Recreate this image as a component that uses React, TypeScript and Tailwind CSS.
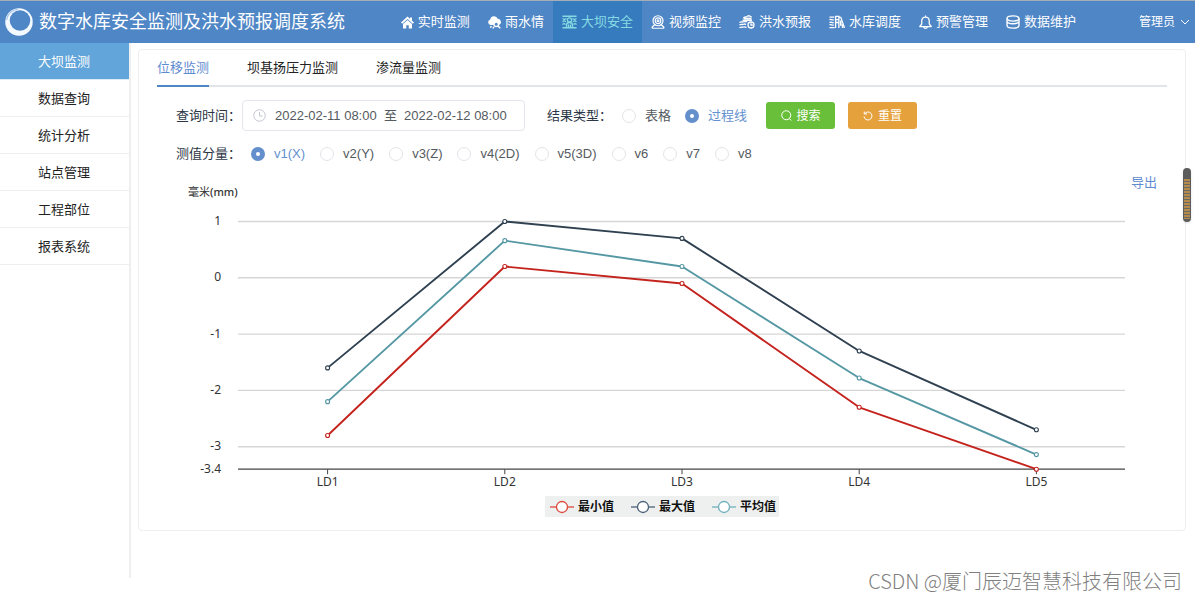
import { useState, type ReactNode } from "react";

const BLUE = "#4f86c6";

function HomeIcon() {
  return (
    <svg width="13" height="13" viewBox="0 0 26 26" fill="currentColor" aria-hidden="true">
      <path d="M13 1 0 13.200l2.500 2.500L13 6.200l10.500 9.500 2.500-2.500L22 9.500V3h-4v2.700z" />
      <path d="M13 8 4 16V25h6.500v-6.500h5V25H22v-9z" />
    </svg>
  );
}

function RainIcon() {
  return (
    <svg width="13" height="13" viewBox="0 0 26 26" aria-hidden="true">
      <path
        d="M5.500 18A5.500 5.500 0 0 1 4.500 7.200 7.800 7.800 0 0 1 19.500 5.500a6.500 6.500 0 0 1 4 11.500z"
        fill="currentColor"
      />
      <circle cx="16.500" cy="16.500" r="4.600" fill={BLUE} stroke="currentColor" strokeWidth="3" />
      <path d="m20 20 4.500 4.500M6.500 20l-1.500 3.500M11.500 21.500l-1.500 3.500" stroke="currentColor" strokeWidth="3" />
    </svg>
  );
}

function DamIcon() {
  return (
    <svg width="15" height="14" viewBox="0 0 30 28" fill="none" stroke="currentColor" strokeWidth="2.600" aria-hidden="true">
      <path d="M1 2.500h28M1 7l4 2 4-2M21 7l4 2 4-2M1 13.500l3-2 4 2M22 13.500l4-2 3 2M1 19l3-2 3 2M23 19l3-2 3 2M1 25.500h28" />
      <circle cx="15" cy="10" r="4.200" />
      <path d="M9 25v-5c0-3 2-5 6-5s6 2 6 5v5M13 19v6M17 19v6" />
    </svg>
  );
}

function CameraIcon() {
  return (
    <svg width="14" height="14" viewBox="0 0 28 28" fill="none" stroke="currentColor" strokeWidth="2.400" aria-hidden="true">
      <circle cx="14" cy="11.500" r="10" />
      <circle cx="14" cy="11.500" r="5.600" />
      <circle cx="14" cy="11.500" r="1.800" />
      <path d="m7.500 19.500-5 4.500c-1 1.500 0 2.500 1.500 2.500h20c1.500 0 2.500-1 1.500-2.500l-5-4.500" />
    </svg>
  );
}

function FloodIcon() {
  return (
    <svg width="16" height="14" viewBox="0 0 32 28" fill="none" stroke="currentColor" strokeWidth="2.600" aria-hidden="true">
      <path d="M7 10.500h19M9 7c0-2 2-3 4.500-3 3 0 3-2.500 6-2.500 2.500 0 3 2.500 6 2.500" />
      <path d="M10 7.200h15" strokeWidth="4" />
      <path d="M1 15c3-2.500 5 0 8-1.500s5 1 7.500-.5M1 20c3-2.500 5 0 8-1.500s3 .5 5 0M1 25.500c3-2.500 5 0 8-1.500s4 1 6 .5" />
      <circle cx="24" cy="20" r="6" />
      <path d="M24 16.500V20h3.500" />
    </svg>
  );
}

function ReservoirIcon() {
  return (
    <svg width="16" height="14" viewBox="0 0 34 28" fill="none" stroke="currentColor" strokeWidth="2.800" aria-hidden="true">
      <path d="M1 3.500h10M1 9c3-2 5 2 9 0M1 15c3-2 6 2 9 0M1 20c3-2 6 2 9 0M1 26h11" />
      <path d="M14 27V2h7v25" />
      <path d="M21 4h4l8 22.500M14 9h7M14 15h7" />
      <path d="M25 11v11M29 19v8" strokeWidth="3.500" />
    </svg>
  );
}

function BellIcon() {
  return (
    <svg width="13" height="14" viewBox="0 0 26 28" fill="none" stroke="currentColor" strokeWidth="2.500" strokeLinejoin="round" aria-hidden="true">
      <path d="M13 1v3M5.500 18V12c0-5 3-8 7.500-8s7.500 3 7.500 8v6l4 5h-23z" />
      <path d="M9.500 24c.5 3.500 6.500 3.500 7 0" />
    </svg>
  );
}

function DatabaseIcon() {
  return (
    <svg width="14" height="14" viewBox="0 0 28 28" fill="none" stroke="currentColor" strokeWidth="2.700" aria-hidden="true">
      <ellipse cx="14" cy="7" rx="12" ry="5.200" />
      <path d="M2 7v5c0 3 5 5.500 12 5.500 5 0 9-1 11-3M2 12v8.500c0 3 5 5.700 12 5.700s12-2.700 12-5.700V7" />
    </svg>
  );
}

const NAV: { label: string; icon: ReactNode }[] = [
  { label: "实时监测", icon: <HomeIcon /> },
  { label: "雨水情", icon: <RainIcon /> },
  { label: "大坝安全", icon: <DamIcon /> },
  { label: "视频监控", icon: <CameraIcon /> },
  { label: "洪水预报", icon: <FloodIcon /> },
  { label: "水库调度", icon: <ReservoirIcon /> },
  { label: "预警管理", icon: <BellIcon /> },
  { label: "数据维护", icon: <DatabaseIcon /> },
];

const SIDE = ["大坝监测", "数据查询", "统计分析", "站点管理", "工程部位", "报表系统"];
const TABS = ["位移监测", "坝基扬压力监测", "渗流量监测"];
const COMPONENTS = ["v1(X)", "v2(Y)", "v3(Z)", "v4(2D)", "v5(3D)", "v6", "v7", "v8"];

const POINTS = ["LD1", "LD2", "LD3", "LD4", "LD5"];
const SERIES = [
  { name: "最小值", color: "#c4231d", legend: "#dc4a3c", values: [-2.8, 0.2, -0.1, -2.3, -3.4] },
  { name: "最大值", color: "#2f4050", legend: "#4b6078", values: [-1.6, 1, 0.7, -1.3, -2.7] },
  { name: "平均值", color: "#5598a4", legend: "#6fb0ba", values: [-2.2, 0.66, 0.2, -1.78, -3.14] },
];

const px = (i: number) => 82 + 177.2 * (i + 0.5);
const py = (v: number) => 21.5 + (1 - v) * 56.3;

function Header() {
  return (
    <header className="flex h-[43px] items-center border-t border-[#a5adb6] bg-[#4f86c6] pl-[5px] pr-[5px] text-white">
      <svg width="28" height="28" viewBox="0 0 56 56" aria-hidden="true">
        <circle cx="28" cy="28" r="27.500" fill="#f4f9ff" />
        <circle cx="30" cy="25" r="20.500" fill="#4f86c6" />
        <path d="M3 24A25.500 25.500 0 0 1 26 2.500" fill="none" stroke="#a9c8e8" strokeWidth="2.500" />
      </svg>
      <h1 className="ml-[6px] whitespace-nowrap text-[18px] leading-6">数字水库安全监测及洪水预报调度系统</h1>
      <nav className="ml-auto flex self-stretch">
        {NAV.map((item) => (
          <a
            key={item.label}
            href="#"
            aria-current={item.label === "大坝安全" ? "page" : undefined}
            className="flex items-center gap-1 whitespace-nowrap px-[9px] text-[13px] leading-5 aria-[current=page]:bg-[#377bbf] aria-[current=page]:text-[#86dbe2]"
          >
            {item.icon}
            {item.label}
          </a>
        ))}
      </nav>
      <button type="button" className="ml-[54px] flex items-center gap-[5px] whitespace-nowrap text-[12px] leading-5">
        管理员
        <svg width="10" height="8" viewBox="0 0 10 8" fill="none" stroke="currentColor" aria-hidden="true">
          <path d="m1 2 4 4 4-4" />
        </svg>
      </button>
    </header>
  );
}

function Sidebar() {
  return (
    <aside className="mb-[22px] w-[131px] shrink-0 border-r-2 border-[#efefef]">
      {SIDE.map((label, i) => (
        <a
          key={label}
          href="#"
          className={
            i === 0
              ? "flex h-[37px] items-center border-b border-[#dcebf7] bg-[#62a5da] pl-[38px] pt-[2px] text-[13px] text-white"
              : "flex h-[37px] items-center border-b border-[#efefef] pl-[38px] pt-[2px] text-[13px] text-[#222]"
          }
        >
          {label}
        </a>
      ))}
    </aside>
  );
}

type RadioProps = { name: string; label: string; checked: boolean; onSelect: () => void };

function Radio({ name, label, checked, onSelect }: RadioProps) {
  return (
    <label className="flex cursor-pointer items-center gap-[9px] whitespace-nowrap text-[13px] leading-5 text-[#555a60] has-checked:text-[#6390cf]">
      <input
        type="radio"
        name={name}
        checked={checked}
        onChange={onSelect}
        className="size-[14px] appearance-none rounded-full border border-[#e2e4e8] bg-white checked:border-[5px] checked:border-[#6390cc]"
      />
      {label}
    </label>
  );
}

function Filters() {
  const [type, setType] = useState("过程线");
  const [component, setComponent] = useState("v1(X)");
  return (
    <form className="pl-[19px]" onSubmit={(e) => e.preventDefault()}>
      <div className="mt-[13px] flex items-center">
        <label htmlFor="from" className="whitespace-nowrap text-[13px] leading-5 text-[#2c3646]">
          查询时间：
        </label>
        <div className="ml-px flex h-[31px] w-[283px] items-center rounded border border-[#e3e6ec] pl-[10px] text-[13px] text-[#555a60]">
          <svg width="13" height="13" viewBox="0 0 26 26" fill="none" stroke="#c3c7cf" strokeWidth="2" aria-hidden="true">
            <circle cx="13" cy="13" r="11.500" />
            <path d="M13 6v8h6" />
          </svg>
          <input id="from" defaultValue="2022-02-11 08:00" className="ml-[9px] w-[104px] outline-none" />
          <span className="ml-[5px]">至</span>
          <input aria-label="结束时间" defaultValue="2022-02-12 08:00" className="ml-[7px] w-[104px] outline-none" />
        </div>
        <span className="ml-[22px] whitespace-nowrap text-[13px] leading-5 text-[#2c3646]">结果类型：</span>
        <div className="ml-[10px] flex gap-[14px]" role="radiogroup" aria-label="结果类型">
          {["表格", "过程线"].map((t) => (
            <Radio key={t} name="type" label={t} checked={type === t} onSelect={() => setType(t)} />
          ))}
        </div>
        <button
          type="submit"
          className="ml-[19px] flex h-[27px] w-[69px] items-center justify-center gap-[5px] rounded-[3px] bg-[#6abf3a] text-[12px] text-white"
        >
          <svg width="11" height="11" viewBox="0 0 22 22" fill="none" stroke="currentColor" strokeWidth="2" aria-hidden="true">
            <circle cx="10.500" cy="10.500" r="9" />
            <path d="m16.500 17 4 4" />
          </svg>
          搜索
        </button>
        <button
          type="reset"
          className="ml-[13px] flex h-[27px] w-[69px] items-center justify-center gap-[5px] rounded-[3px] bg-[#e5a13b] text-[12px] text-white"
        >
          <svg width="10" height="11" viewBox="0 0 20 22" fill="none" stroke="currentColor" strokeWidth="2" aria-hidden="true">
            <path d="M2.500 3v5H8M3 8a8 8 0 1 1-1 5" />
          </svg>
          重置
        </button>
      </div>
      <div className="mt-[13px] flex items-center">
        <span className="whitespace-nowrap text-[13px] leading-5 text-[#2c3646]">测值分量：</span>
        <div className="ml-[10px] flex gap-[15px]" role="radiogroup" aria-label="测值分量">
          {COMPONENTS.map((c) => (
            <Radio key={c} name="component" label={c} checked={component === c} onSelect={() => setComponent(c)} />
          ))}
        </div>
      </div>
    </form>
  );
}

function Chart() {
  return (
    <section className="mt-2">
      <div className="flex h-[28px] justify-between pl-[31px] pr-[10px]">
        <span className="self-end font-['Noto_Sans','Noto_Sans_CJK_SC',sans-serif] text-[11px] leading-4 text-[#333]">
          毫米<span className="font-medium">(mm)</span>
        </span>
        <a href="#" className="text-[13px] leading-[22px] text-[#5f8bd0]">
          导出
        </a>
      </div>
      <svg viewBox="0 0 1010 290" className="block w-full font-['Noto_Sans',sans-serif]" role="img" aria-label="位移监测过程线">
        {[1, 0, -1, -2, -3].map((v) => (
          <line key={v} x1="81" x2="968" y1={py(v)} y2={py(v)} stroke="#d6d6d6" strokeWidth="1.400" />
        ))}
        {[1, 0, -1, -2, -3, -3.4].map((v) => (
          <text key={v} x="64" y={py(v) + 3.5} textAnchor="end" fontSize="12" fill="#333">
            {v}
          </text>
        ))}
        <line x1="81" x2="968" y1={py(-3.4)} y2={py(-3.4)} stroke="#444" strokeWidth="1.300" />
        {POINTS.map((p, i) => (
          <g key={p}>
            <line x1={px(i)} x2={px(i)} y1={py(-3.4)} y2={py(-3.4) + 5} stroke="#444" />
            <text x={px(i)} y="286" textAnchor="middle" fontSize="12" fill="#333">
              {p}
            </text>
          </g>
        ))}
        {SERIES.map((s) => (
          <g key={s.name} stroke={s.color}>
            <polyline
              points={s.values.map((v, i) => `${px(i)},${py(v)}`).join(" ")}
              fill="none"
              strokeWidth="1.900"
              strokeLinejoin="round"
            />
            {s.values.map((v, i) => (
              <circle key={i} cx={px(i)} cy={py(v)} r="2" fill="#fff" strokeWidth="1.100" />
            ))}
          </g>
        ))}
      </svg>
      <ul className="mx-auto mt-[6px] flex h-[21px] w-fit items-center gap-[17px] bg-[#eef0f0] pl-[5px] pr-[3px]">
        {SERIES.map((s) => (
          <li key={s.name} className="flex items-center gap-1 text-[12px] font-bold leading-5 text-[#111]">
            <svg width="24" height="14" viewBox="0 0 24 14" stroke={s.legend} strokeWidth="1.300" aria-hidden="true">
              <path d="M0 7h24" />
              <circle cx="12" cy="7" r="5.500" fill="#fff" />
            </svg>
            {s.name}
          </li>
        ))}
      </ul>
    </section>
  );
}

export default function App() {
  const [tab, setTab] = useState(TABS[0]);
  return (
    <div className="relative flex min-h-screen flex-col bg-white font-['Liberation_Sans','Noto_Sans_CJK_SC',sans-serif]">
      <Header />
      <div className="flex grow">
        <Sidebar />
        <main className="min-w-0 grow pl-[7px] pr-[9px] pt-[6px]">
          <div className="rounded border border-[#eeeeee] px-[18px] pb-[13px]">
            <div role="tablist" className="flex h-[37px] gap-[38px] border-b-2 border-[#e1e5ea]">
              {TABS.map((t) => (
                <button
                  key={t}
                  type="button"
                  role="tab"
                  aria-selected={tab === t}
                  onClick={() => setTab(t)}
                  className="-mb-[2px] whitespace-nowrap border-b-2 border-transparent pt-px text-[13px] leading-5 text-[#222] aria-selected:border-[#4f86c6] aria-selected:text-[#5f8bd0]"
                >
                  {t}
                </button>
              ))}
            </div>
            <Filters />
            <Chart />
          </div>
        </main>
      </div>
      <div
        aria-hidden="true"
        className="absolute right-[4px] top-[168px] h-[54px] w-[8px] overflow-hidden rounded-full bg-[#5c5c5c] px-px pb-[3px] pt-[11px] shadow"
      >
        <div className="h-full bg-[repeating-linear-gradient(#b58a4c_0_2px,#6b6b66_2px_3px)]" />
      </div>
      <p className="absolute bottom-[7px] right-[13px] font-['Noto_Sans_CJK_SC',sans-serif] text-[20px] font-light leading-6 text-[#808080]">
        CSDN @厦门辰迈智慧科技有限公司
      </p>
    </div>
  );
}
